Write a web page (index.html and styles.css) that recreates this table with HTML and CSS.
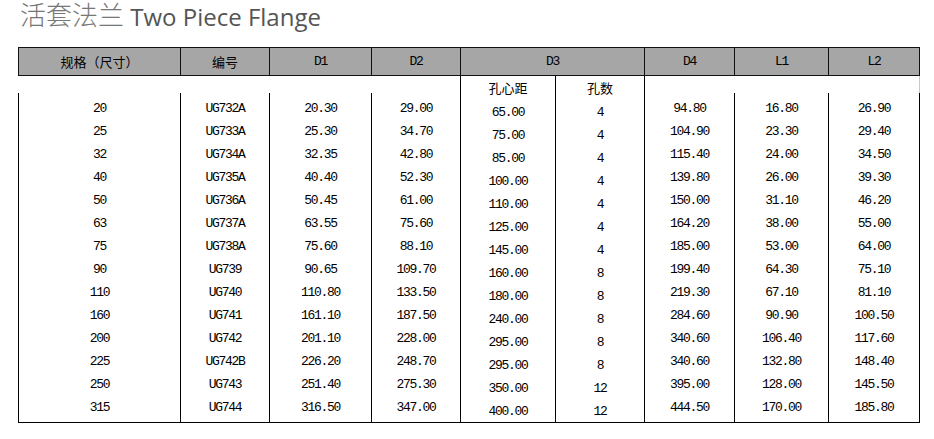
FILE: index.html
```html
<!DOCTYPE html>
<html lang="zh">
<head>
<meta charset="utf-8">
<title>活套法兰 Two Piece Flange</title>
<link rel="stylesheet" href="styles.css">
</head>
<body>
<h1 class="title"><span class="cn">活套法兰</span> Two Piece Flange</h1>
<div class="table">
  <div class="head">
    <div class="cjk">规格（尺寸）</div>
    <div class="cjk">编号</div>
    <div>D1</div>
    <div>D2</div>
    <div>D3</div>
    <div>D4</div>
    <div>L1</div>
    <div>L2</div>
  </div>
  <div class="body">
    <div class="col">
      <div class="gap"></div>
      <div class="list line">
        <div class="cell">20</div><div class="cell">25</div><div class="cell">32</div><div class="cell">40</div><div class="cell">50</div><div class="cell">63</div><div class="cell">75</div><div class="cell">90</div><div class="cell">110</div><div class="cell">160</div><div class="cell">200</div><div class="cell">225</div><div class="cell">250</div><div class="cell">315</div>
      </div>
    </div>
    <div class="col">
      <div class="gap"></div>
      <div class="list line">
        <div class="cell">UG732A</div><div class="cell">UG733A</div><div class="cell">UG734A</div><div class="cell">UG735A</div><div class="cell">UG736A</div><div class="cell">UG737A</div><div class="cell">UG738A</div><div class="cell">UG739</div><div class="cell">UG740</div><div class="cell">UG741</div><div class="cell">UG742</div><div class="cell">UG742B</div><div class="cell">UG743</div><div class="cell">UG744</div>
      </div>
    </div>
    <div class="col">
      <div class="gap"></div>
      <div class="list line">
        <div class="cell">20.30</div><div class="cell">25.30</div><div class="cell">32.35</div><div class="cell">40.40</div><div class="cell">50.45</div><div class="cell">63.55</div><div class="cell">75.60</div><div class="cell">90.65</div><div class="cell">110.80</div><div class="cell">161.10</div><div class="cell">201.10</div><div class="cell">226.20</div><div class="cell">251.40</div><div class="cell">316.50</div>
      </div>
    </div>
    <div class="col">
      <div class="gap"></div>
      <div class="list line">
        <div class="cell">29.00</div><div class="cell">34.70</div><div class="cell">42.80</div><div class="cell">52.30</div><div class="cell">61.00</div><div class="cell">75.60</div><div class="cell">88.10</div><div class="cell">109.70</div><div class="cell">133.50</div><div class="cell">187.50</div><div class="cell">228.00</div><div class="cell">248.70</div><div class="cell">275.30</div><div class="cell">347.00</div>
      </div>
    </div>
    <div class="col sub">
      <div class="cell cjk">孔心距</div>
      <div class="cell">65.00</div><div class="cell">75.00</div><div class="cell">85.00</div><div class="cell">100.00</div><div class="cell">110.00</div><div class="cell">125.00</div><div class="cell">145.00</div><div class="cell">160.00</div><div class="cell">180.00</div><div class="cell">240.00</div><div class="cell">295.00</div><div class="cell">295.00</div><div class="cell">350.00</div><div class="cell">400.00</div>
    </div>
    <div class="col sub">
      <div class="cell cjk">孔数</div>
      <div class="cell">4</div><div class="cell">4</div><div class="cell">4</div><div class="cell">4</div><div class="cell">4</div><div class="cell">4</div><div class="cell">4</div><div class="cell">8</div><div class="cell">8</div><div class="cell">8</div><div class="cell">8</div><div class="cell">8</div><div class="cell">12</div><div class="cell">12</div>
    </div>
    <div class="col edge">
      <div class="gap"></div>
      <div class="list">
        <div class="cell">94.80</div><div class="cell">104.90</div><div class="cell">115.40</div><div class="cell">139.80</div><div class="cell">150.00</div><div class="cell">164.20</div><div class="cell">185.00</div><div class="cell">199.40</div><div class="cell">219.30</div><div class="cell">284.60</div><div class="cell">340.60</div><div class="cell">340.60</div><div class="cell">395.00</div><div class="cell">444.50</div>
      </div>
    </div>
    <div class="col">
      <div class="gap"></div>
      <div class="list line">
        <div class="cell">16.80</div><div class="cell">23.30</div><div class="cell">24.00</div><div class="cell">26.00</div><div class="cell">31.10</div><div class="cell">38.00</div><div class="cell">53.00</div><div class="cell">64.30</div><div class="cell">67.10</div><div class="cell">90.90</div><div class="cell">106.40</div><div class="cell">132.80</div><div class="cell">128.00</div><div class="cell">170.00</div>
      </div>
    </div>
    <div class="col last">
      <div class="gap"></div>
      <div class="list line">
        <div class="cell">26.90</div><div class="cell">29.40</div><div class="cell">34.50</div><div class="cell">39.30</div><div class="cell">46.20</div><div class="cell">55.00</div><div class="cell">64.00</div><div class="cell">75.10</div><div class="cell">81.10</div><div class="cell">100.50</div><div class="cell">117.60</div><div class="cell">148.40</div><div class="cell">145.50</div><div class="cell">185.80</div>
      </div>
    </div>
  </div>
</div>
</body>
</html>
```
FILE: styles.css
```css
* { box-sizing: border-box; }

body {
  margin: 0;
  background: #fff;
}

.title {
  margin: 0;
  padding: 1px 0 0 20px;
  height: 27px;
  line-height: 26px;
  font-size: 24px;
  font-weight: normal;
  color: #555;
  font-family: "Open Sans", "Noto Sans CJK SC", sans-serif;
  white-space: nowrap;
}

.title .cn {
  color: #777;
  font-size: 26px;
  vertical-align: 1px;
  font-family: "Noto Sans CJK SC", sans-serif;
  font-weight: 300;
}

.table {
  margin: 20px 0 0 18px;
  width: 902px;
  font-family: "Liberation Mono", "Noto Sans CJK SC", monospace;
  font-size: 13px;
  letter-spacing: -1.3px;
  color: #000;
}

.cjk {
  letter-spacing: 0;
}

.head {
  display: grid;
  grid-template-columns: 162px 89px 102px 89px 184px 90px 94px 92px;
  height: 29px;
  background: #a6a6a6;
  border-top: 1px solid #111;
  border-bottom: 1px solid #111;
}

.head > div {
  border-left: 1px solid #111;
  display: flex;
  align-items: center;
  justify-content: center;
}

.head > div:last-child {
  border-right: 1px solid #111;
}

.body {
  display: grid;
  grid-template-columns: 162px 89px 102px 89px 95px 89px 90px 94px 92px;
  border-bottom: 1px solid #000;
}

.col {
  display: flex;
  flex-direction: column;
  text-align: center;
}

.gap {
  height: 17px;
  flex: none;
}

.list {
  flex: 1;
  padding: 3px 0 4px;
}

.list.line {
  border-left: 1px solid #000;
}

.cell {
  height: 23px;
  line-height: 25px;
  white-space: nowrap;
}

.col.sub {
  border-left: 1px solid #000;
  padding-top: 1px;
}

.col.edge {
  border-left: 1px solid #000;
}

.col.last .gap {
  border-right: 1px solid #c8c8c8;
}

.col.last .list {
  border-right: 1px solid #000;
}
```
